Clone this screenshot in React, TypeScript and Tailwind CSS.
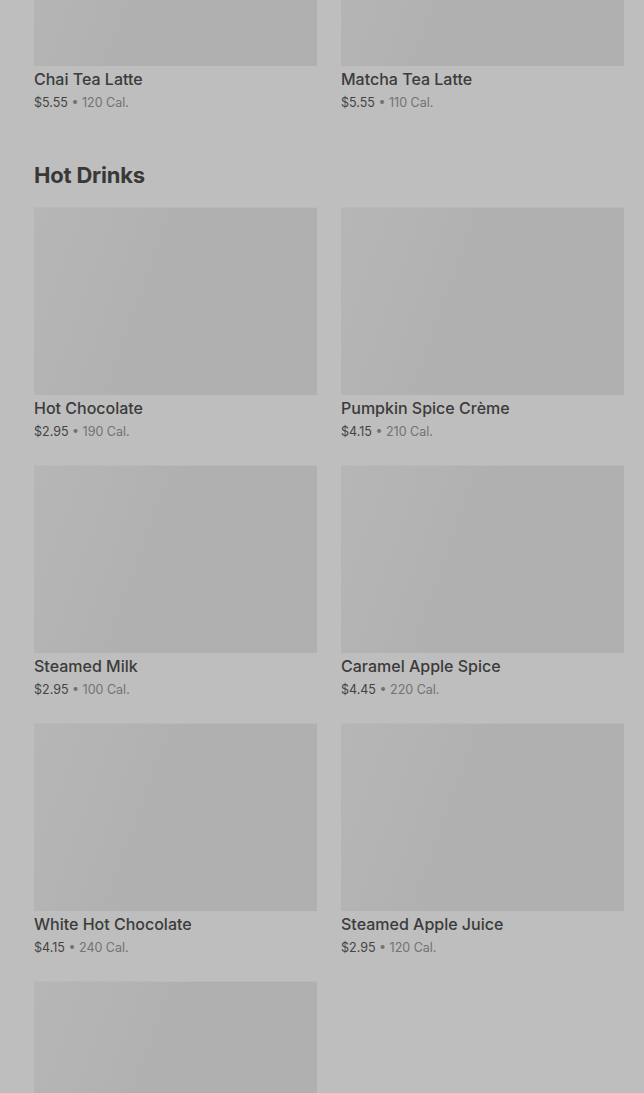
import React from 'react';

interface Item {
    name: string;
    price: string;
    cal: string;
}

const TOP: Item[] = [
    { name: 'Chai Tea Latte', price: '$5.55', cal: '120 Cal.' },
    { name: 'Matcha Tea Latte', price: '$5.55', cal: '110 Cal.' },
];

const HOT: Item[] = [
    { name: 'Hot Chocolate', price: '$2.95', cal: '190 Cal.' },
    { name: 'Pumpkin Spice Crème', price: '$4.15', cal: '210 Cal.' },
    { name: 'Steamed Milk', price: '$2.95', cal: '100 Cal.' },
    { name: 'Caramel Apple Spice', price: '$4.45', cal: '220 Cal.' },
    { name: 'White Hot Chocolate', price: '$4.15', cal: '240 Cal.' },
    { name: 'Steamed Apple Juice', price: '$2.95', cal: '120 Cal.' },
    { name: '', price: '', cal: '' },
];

function Card({ item }: { item: Item }) {
    return (
        <div className="flex flex-col">
            {/* image placeholder */}
            <div className="h-[188px] w-full bg-[linear-gradient(110deg,#b6b6b6_0%,#b3b3b3_25%,#b0b0b0_45%,#b0b0b0_100%)] border-t border-[#b9b9b9]" />
            {item.name && (
                <div className="pt-[4px]">
                    <div className="h-[18px] text-[16px] leading-[18px] font-medium text-[#3b3b3b]">{item.name}</div>
                    <div className="mt-[7px] h-[16px] text-[12.5px] leading-[16px] text-[#444]">
                        {item.price}
                        <span className="text-[#727272]"> • {item.cal}</span>
                    </div>
                </div>
            )}
        </div>
    );
}

export default function App() {
    return (
        <div
            className="w-[644px] h-[1093px] overflow-hidden bg-[#bebebe]"
            style={{ fontFamily: 'Inter, "Noto Sans", sans-serif' }}
        >
            <div className="-mt-[122px] pl-[34px] pr-[20px]">
                <div className="grid grid-cols-2 gap-x-[24px]">
                    {TOP.map((it) => (
                        <Card key={it.name} item={it} />
                    ))}
                </div>

                <h2 className="mt-[50px] text-[22px] leading-[28px] font-bold tracking-[-0.2px] text-[#383838]">
                    Hot Drinks
                </h2>

                <div className="mt-[18px] grid grid-cols-2 gap-x-[24px] gap-y-[25px]">
                    {HOT.map((it, i) => (
                        <Card key={i} item={it} />
                    ))}
                </div>
            </div>
        </div>
    );
}
